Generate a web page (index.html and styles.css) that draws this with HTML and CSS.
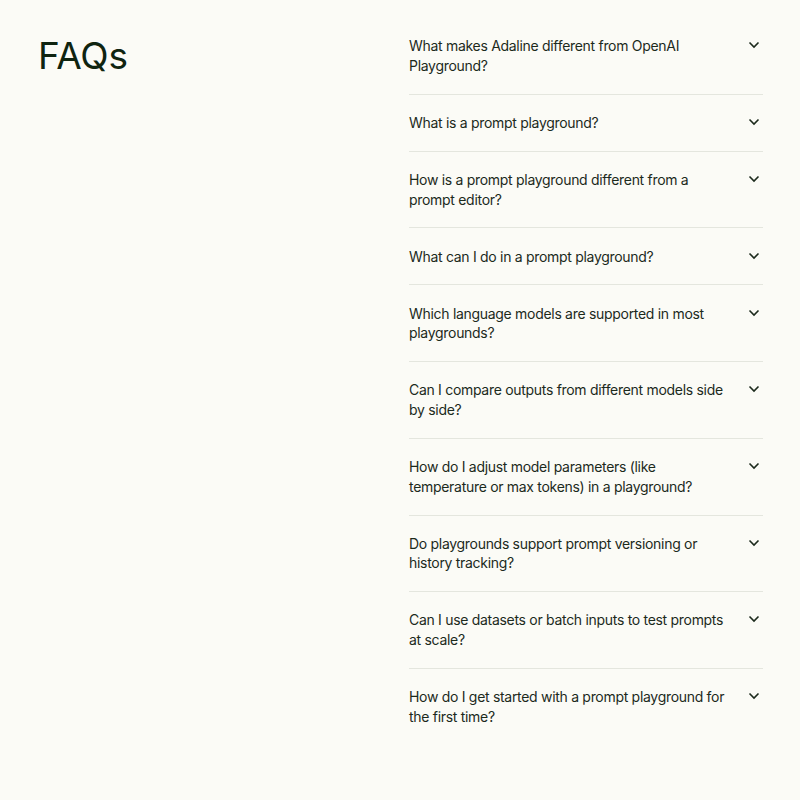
FILE: index.html
```html
<!DOCTYPE html>
<html lang="en">
<head>
<meta charset="utf-8">
<title>FAQs</title>
<link rel="stylesheet" href="styles.css">
</head>
<body>
<section class="faq">
  <h2 class="faq-title">FAQs</h2>
  <div class="faq-list">
    <div class="faq-item"><span class="q">What makes Adaline different from OpenAI Playground?</span><svg class="chev" viewBox="0 0 12 8"><path d="M1.5 1.5L6 6L10.5 1.5"/></svg></div>
    <div class="faq-item"><span class="q">What is a prompt playground?</span><svg class="chev" viewBox="0 0 12 8"><path d="M1.5 1.5L6 6L10.5 1.5"/></svg></div>
    <div class="faq-item"><span class="q">How is a prompt playground different from a prompt editor?</span><svg class="chev" viewBox="0 0 12 8"><path d="M1.5 1.5L6 6L10.5 1.5"/></svg></div>
    <div class="faq-item"><span class="q">What can I do in a prompt playground?</span><svg class="chev" viewBox="0 0 12 8"><path d="M1.5 1.5L6 6L10.5 1.5"/></svg></div>
    <div class="faq-item"><span class="q">Which language models are supported in most playgrounds?</span><svg class="chev" viewBox="0 0 12 8"><path d="M1.5 1.5L6 6L10.5 1.5"/></svg></div>
    <div class="faq-item"><span class="q">Can I compare outputs from different models side by side?</span><svg class="chev" viewBox="0 0 12 8"><path d="M1.5 1.5L6 6L10.5 1.5"/></svg></div>
    <div class="faq-item"><span class="q">How do I adjust model parameters (like temperature or max tokens) in a playground?</span><svg class="chev" viewBox="0 0 12 8"><path d="M1.5 1.5L6 6L10.5 1.5"/></svg></div>
    <div class="faq-item"><span class="q">Do playgrounds support prompt versioning or history tracking?</span><svg class="chev" viewBox="0 0 12 8"><path d="M1.5 1.5L6 6L10.5 1.5"/></svg></div>
    <div class="faq-item"><span class="q">Can I use datasets or batch inputs to test prompts at scale?</span><svg class="chev" viewBox="0 0 12 8"><path d="M1.5 1.5L6 6L10.5 1.5"/></svg></div>
    <div class="faq-item last"><span class="q">How do I get started with a prompt playground for the first time?</span><svg class="chev" viewBox="0 0 12 8"><path d="M1.5 1.5L6 6L10.5 1.5"/></svg></div>
  </div>
</section>
</body>
</html>
```
FILE: styles.css
```css
html, body {
  margin: 0;
  padding: 0;
  background: #fbfbf6;
}
body {
  font-family: "Inter", "Liberation Sans", sans-serif;
  color: #1c2a1c;
}
.faq {
  display: grid;
  grid-template-columns: 1fr 354px;
  padding: 18px 37px 0 38px;
}
.faq-title {
  margin: 16px 0 0 0;
  font-size: 37px;
  font-weight: 400;
  line-height: 1.2;
  letter-spacing: -0.2px;
  color: #0f2410;
}
.faq-list {
  display: flex;
  flex-direction: column;
}
.faq-item {
  display: flex;
  justify-content: space-between;
  align-items: flex-start;
  gap: 16px;
  padding: 18.2px 0 18.2px 0;
  border-bottom: 1px solid #e4e6de;
  font-size: 14px;
  line-height: 19.66px;
  letter-spacing: -0.3px;
}
.faq-item.last {
  border-bottom: none;
}
.q {
  max-width: 326px;
}
.chev {
  width: 12px;
  height: 8px;
  margin-top: 5px;
  margin-right: 3px;
  flex: none;
  fill: none;
  stroke: #1c2a1c;
  stroke-width: 1.6;
}
```
